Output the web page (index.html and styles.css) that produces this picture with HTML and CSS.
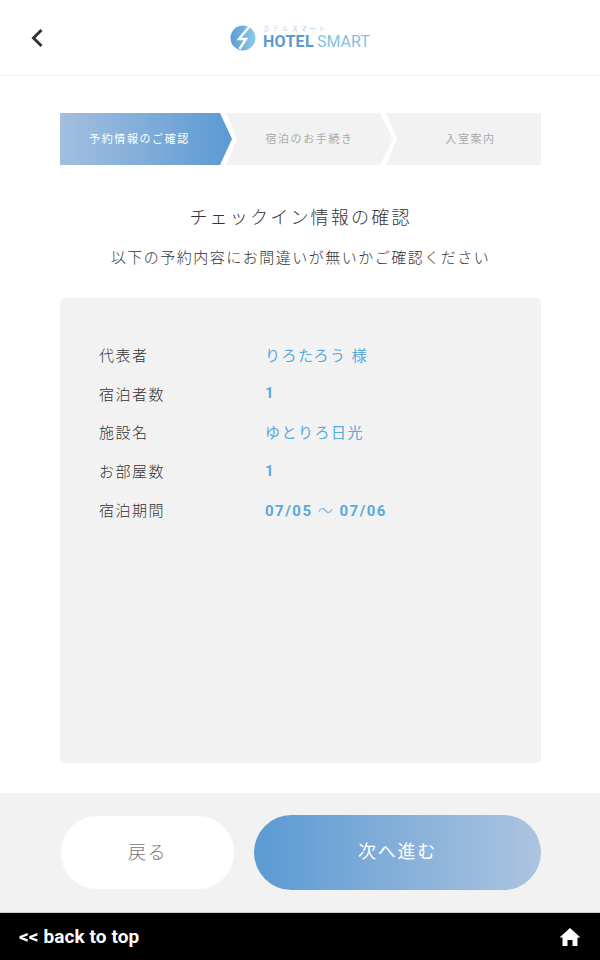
FILE: index.html
```html
<!DOCTYPE html>
<html lang="ja">
<head>
    <meta charset="UTF-8">
    <meta name="viewport" content="width=device-width, initial-scale=1.0">
    <title>HOTEL SMART - チェックイン情報の確認</title>
    <link rel="stylesheet" href="styles.css">
</head>
<body>
    <div class="page">
        <!-- ヘッダー -->
        <div class="header">
            <a class="back-link" href="#">
                <svg width="14" height="20" viewBox="0 0 14 20"><path d="M11.5 2 L3.5 10 L11.5 18" fill="none" stroke="#333" stroke-width="3"/></svg>
            </a>
            <div class="logo">
                <svg class="logo-mark" width="26" height="26" viewBox="0 0 26 26">
                    <defs>
                        <linearGradient id="logoGrad" x1="0" y1="0" x2="1" y2="0">
                            <stop offset="0" stop-color="#5b9ad3"/>
                            <stop offset="1" stop-color="#8fcbe6"/>
                        </linearGradient>
                    </defs>
                    <circle cx="13" cy="13" r="12.5" fill="url(#logoGrad)"/>
                    <path d="M19 2 L9 14 H16 L9.5 24" fill="none" stroke="#fff" stroke-width="2.4"/>
                </svg>
                <div class="logo-text">
                    <span class="logo-kana">ホテルスマート</span>
                    <span class="logo-name"><b>HOTEL</b><i>SMART</i></span>
                </div>
            </div>
        </div>

        <div class="main">
            <!-- ステップ -->
            <div class="steps">
                <div class="step step-active">予約情報のご確認</div>
                <div class="step step-middle">宿泊のお手続き</div>
                <div class="step step-last">入室案内</div>
            </div>

            <h1 class="title">チェックイン情報の確認</h1>
            <p class="lead">以下の予約内容にお間違いが無いかご確認ください</p>

            <div class="info-box">
                <div class="info-row"><span class="info-label">代表者</span><span class="info-value">りろたろう 様</span></div>
                <div class="info-row"><span class="info-label">宿泊者数</span><span class="info-value num">1</span></div>
                <div class="info-row"><span class="info-label">施設名</span><span class="info-value">ゆとりろ日光</span></div>
                <div class="info-row"><span class="info-label">お部屋数</span><span class="info-value num">1</span></div>
                <div class="info-row"><span class="info-label">宿泊期間</span><span class="info-value num">07/05 <span class="tilde">～</span> 07/06</span></div>
            </div>
        </div>

        <!-- ボタン -->
        <div class="actions">
            <button class="btn btn-back">戻る</button>
            <button class="btn btn-next">次へ進む</button>
        </div>

        <div class="footer">
            <a class="back-top" href="#">&lt;&lt; back to top</a>
            <svg width="22" height="20" viewBox="0 0 22 20"><path d="M11 1 L21.5 10.5 H18.5 V19 H13.5 V13 H8.5 V19 H3.5 V10.5 H0.5 Z" fill="#fff"/></svg>
        </div>
    </div>
</body>
</html>
```

FILE: styles.css
```css
* {
    box-sizing: border-box;
}
body {
    margin: 0;
    padding: 0;
    background: #FFFFFF;
    color: #333333;
    font-family: 'Roboto', 'Noto Sans CJK JP', sans-serif;
    font-weight: 300;
}
.page {
    display: flex;
    flex-direction: column;
    height: 960px;
    overflow: hidden;
}
.header {
    position: relative;
    height: 76px;
    flex-shrink: 0;
    display: flex;
    align-items: center;
    justify-content: center;
    border-bottom: 1px solid #F5F5F5;
}
.back-link {
    position: absolute;
    left: 30px;
    top: 28px;
    display: block;
    height: 20px;
}
.logo {
    display: flex;
    align-items: center;
    gap: 7px;
}
.logo-mark {
    display: block;
}
.logo-text {
    display: flex;
    flex-direction: column;
    line-height: 1;
    width: 107px;
}
.logo-kana {
    font-size: 7px;
    letter-spacing: 2.3px;
    color: #8fb6dc;
    margin-bottom: 1px;
    white-space: nowrap;
}
.logo-name {
    font-size: 16px;
    white-space: nowrap;
}
.logo-name b {
    font-weight: 700;
    letter-spacing: 0.3px;
    color: #5b9ad3;
    margin-right: 3px;
}
.logo-name i {
    font-style: normal;
    font-weight: 400;
    color: #7fc3e2;
}
.main {
    flex-grow: 1;
    padding: 37px 59px 30px 60px;
    display: flex;
    flex-direction: column;
}
.steps {
    display: flex;
    height: 52px;
    flex-shrink: 0;
}
.step {
    display: flex;
    align-items: center;
    justify-content: center;
    padding-bottom: 2px;
    font-size: 11px;
    font-weight: 400;
    letter-spacing: 1.6px;
    color: #AAAAAA;
    background: #F2F2F2;
}
.step-active {
    width: 172px;
    padding-right: 13px;
    color: #FFFFFF;
    background: linear-gradient(to right, #a3bfdf, #5b9ad3);
    clip-path: polygon(0 0, 160px 0, 172px 50%, 160px 100%, 0 100%);
}
.step-middle {
    width: 167px;
    margin-left: -6px;
    clip-path: polygon(0 0, 154px 0, 167px 50%, 154px 100%, 0 100%, 11px 50%);
}
.step-last {
    flex-grow: 1;
    margin-left: -7px;
    padding-left: 14px;
    clip-path: polygon(0 0, 100% 0, 100% 100%, 0 100%, 11px 50%);
}
.title {
    margin: 40px 0 0;
    font-size: 18px;
    font-weight: 300;
    line-height: 26px;
    letter-spacing: 2.2px;
    text-align: center;
}
.lead {
    margin: 14px 0 0;
    font-size: 15px;
    line-height: 26px;
    letter-spacing: 1.5px;
    text-align: center;
}
.info-box {
    flex-grow: 1;
    margin-top: 27px;
    padding: 37px 39px;
    background: #F2F2F2;
    border-radius: 5px;
}
.info-row {
    display: flex;
    align-items: center;
    height: 38.75px;
    font-size: 15px;
    letter-spacing: 1.5px;
}
.info-label {
    width: 166px;
    flex-shrink: 0;
}
.info-value {
    color: #5AA9DC;
    font-weight: 400;
}
.info-value.num {
    font-weight: 700;
}
.info-value .tilde {
    font-weight: 300;
}
.actions {
    height: 120px;
    flex-shrink: 0;
    display: flex;
    gap: 19px;
    align-items: center;
    padding: 0 59px 0 60px;
    background: #F2F2F2;
    border-bottom: 1px solid #CCCCCC;
}
.btn {
    height: 75px;
    border: none;
    border-radius: 38px;
    font-family: inherit;
    font-size: 18px;
    letter-spacing: 1.5px;
}
.btn-back {
    width: 175px;
    padding-bottom: 4px;
    border: 1px solid #F5F5F5;
    background: #FFFFFF;
    color: #777777;
    font-weight: 300;
}
.btn-next {
    flex-grow: 1;
    padding-bottom: 6px;
    background: linear-gradient(to right, #5b9ad3, #adc4e0);
    color: #FFFFFF;
    font-weight: 400;
    letter-spacing: 1.8px;
}
.footer {
    height: 47px;
    flex-shrink: 0;
    display: flex;
    align-items: center;
    justify-content: space-between;
    padding: 0 19px;
    background: #000000;
}
.back-top {
    color: #FFFFFF;
    font-size: 19px;
    font-weight: 700;
    letter-spacing: 0.1px;
    text-decoration: none;
}
```
